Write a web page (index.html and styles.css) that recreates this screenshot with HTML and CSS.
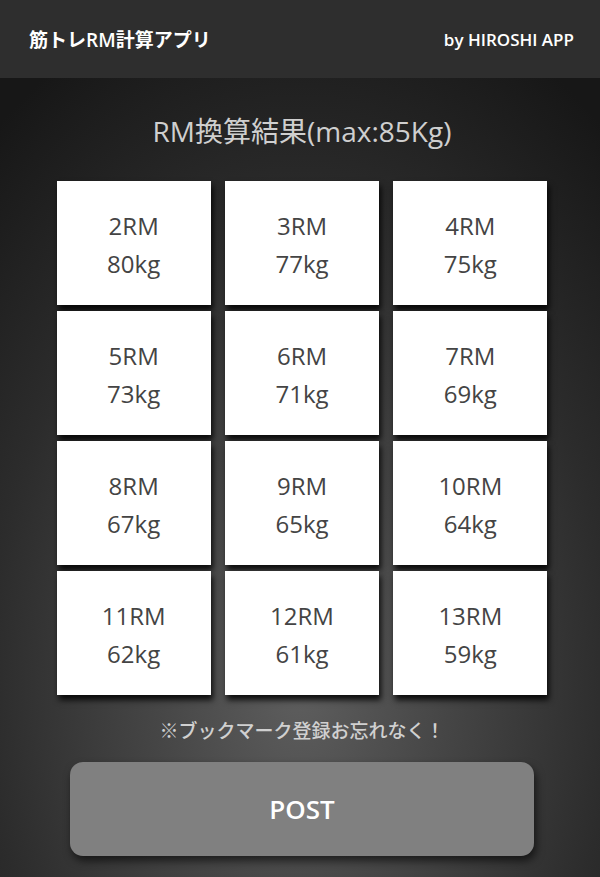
FILE: index.html
```html
<!DOCTYPE html>
<html lang="ja">
<head>
  <meta charset="UTF-8">
  <title>筋トレRM計算アプリ</title>
  <link rel="stylesheet" href="styles.css">
</head>
<body>
  <header class="topbar">
    <div class="app-title">筋トレRM計算アプリ</div>
    <div class="app-by">by HIROSHI APP</div>
  </header>
  <main class="content">
    <h1 class="result-title">RM換算結果(max:85Kg)</h1>
    <div class="rm-grid">
      <div class="rm-card"><span>2RM</span><span>80kg</span></div>
      <div class="rm-card"><span>3RM</span><span>77kg</span></div>
      <div class="rm-card"><span>4RM</span><span>75kg</span></div>
      <div class="rm-card"><span>5RM</span><span>73kg</span></div>
      <div class="rm-card"><span>6RM</span><span>71kg</span></div>
      <div class="rm-card"><span>7RM</span><span>69kg</span></div>
      <div class="rm-card"><span>8RM</span><span>67kg</span></div>
      <div class="rm-card"><span>9RM</span><span>65kg</span></div>
      <div class="rm-card"><span>10RM</span><span>64kg</span></div>
      <div class="rm-card"><span>11RM</span><span>62kg</span></div>
      <div class="rm-card"><span>12RM</span><span>61kg</span></div>
      <div class="rm-card"><span>13RM</span><span>59kg</span></div>
    </div>
    <p class="note">※ブックマーク登録お忘れなく！</p>
    <button class="post-btn">POST</button>
  </main>
</body>
</html>
```
FILE: styles.css
```css
html, body {
  margin: 0;
  height: 100%;
}
body {
  font-family: "Open Sans", "Noto Sans CJK JP", sans-serif;
  background: #1a1a1a;
  overflow: hidden;
}
.topbar {
  height: 78px;
  background: #2e2e2e;
  display: flex;
  align-items: center;
  justify-content: space-between;
  padding: 0 26px 0 29px;
  color: #fff;
  font-weight: 600;
}
.app-title {
  font-size: 19px;
  font-weight: 600;
}
.app-by {
  font-size: 17px;
}
.content {
  height: calc(100% - 78px);
  background: radial-gradient(ellipse 480px 720px at 50% 76%, #5e5e5e 0%, #464646 30%, #2c2c2c 65%, #171717 100%);
  padding: 31px 0 0 4px;
  box-sizing: border-box;
  display: flex;
  flex-direction: column;
  align-items: center;
}
.result-title {
  margin: 0;
  font-size: 28px;
  font-weight: 400;
  line-height: 44px;
  color: #cfcfcf;
}
.rm-grid {
  margin-top: 28px;
  width: 491px;
  display: grid;
  grid-template-columns: repeat(3, 1fr);
  grid-auto-rows: 124px;
  column-gap: 14px;
  row-gap: 6px;
}
.rm-card {
  background: #fff;
  color: #444;
  font-size: 24px;
  font-weight: 500;
  line-height: 38px;
  display: flex;
  flex-direction: column;
  align-items: center;
  justify-content: center;
  padding-top: 4px;
  box-sizing: border-box;
  box-shadow: 2px 5px 6px rgba(0, 0, 0, 0.85);
}
.note {
  margin: 21px 0 0;
  font-size: 19px;
  line-height: 30px;
  color: #d0d0d0;
  font-weight: 500;
}
.post-btn {
  margin-top: 16px;
  width: 464px;
  height: 94px;
  border: none;
  border-radius: 13px;
  background: #808080;
  color: #fff;
  font-family: inherit;
  font-size: 26px;
  font-weight: 600;
  box-shadow: 2px 5px 8px rgba(0, 0, 0, 0.6);
}
```
